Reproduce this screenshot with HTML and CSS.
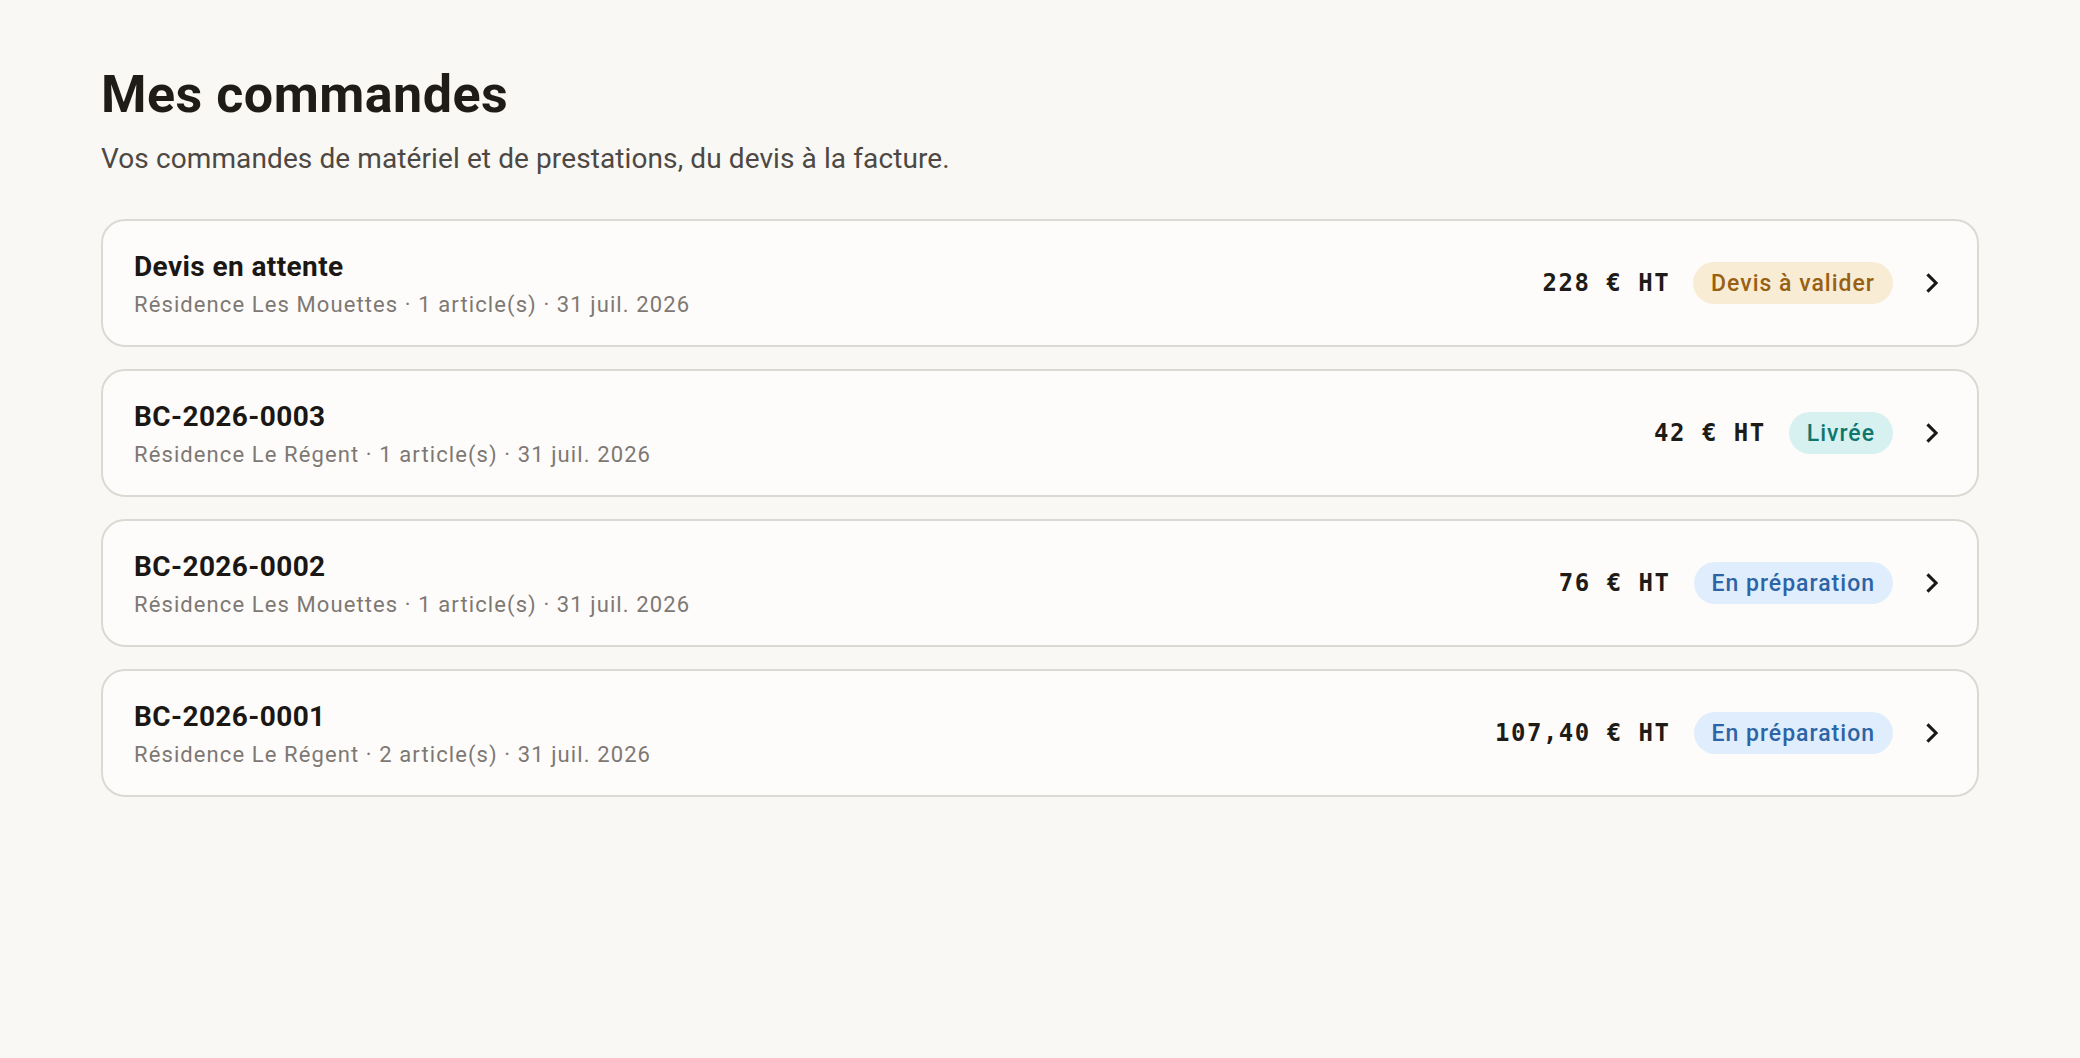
FILE: index.html
```html
<!DOCTYPE html>
<html lang="fr">
<head>
<meta charset="utf-8">
<title>Mes commandes</title>
<link rel="stylesheet" href="styles.css">
</head>
<body>
<main class="page">
  <header class="page-head">
    <h1 class="page-title">Mes commandes</h1>
    <p class="page-sub">Vos commandes de matériel et de prestations, du devis à la facture.</p>
  </header>
  <ul class="orders">
    <li class="order">
      <div class="order-info">
        <h2 class="order-title">Devis en attente</h2>
        <p class="order-meta">Résidence Les Mouettes · 1 article(s) · 31 juil. 2026</p>
      </div>
      <div class="order-side">
        <span class="price">228 € HT</span>
        <span class="badge badge-amber">Devis à valider</span>
        <svg class="chevron" viewBox="0 0 24 24" width="28" height="28" aria-hidden="true"><path d="M9 5.5l6.5 6.5L9 18.5"/></svg>
      </div>
    </li>
    <li class="order">
      <div class="order-info">
        <h2 class="order-title">BC-2026-0003</h2>
        <p class="order-meta">Résidence Le Régent · 1 article(s) · 31 juil. 2026</p>
      </div>
      <div class="order-side">
        <span class="price">42 € HT</span>
        <span class="badge badge-teal">Livrée</span>
        <svg class="chevron" viewBox="0 0 24 24" width="28" height="28" aria-hidden="true"><path d="M9 5.5l6.5 6.5L9 18.5"/></svg>
      </div>
    </li>
    <li class="order">
      <div class="order-info">
        <h2 class="order-title">BC-2026-0002</h2>
        <p class="order-meta">Résidence Les Mouettes · 1 article(s) · 31 juil. 2026</p>
      </div>
      <div class="order-side">
        <span class="price">76 € HT</span>
        <span class="badge badge-blue">En préparation</span>
        <svg class="chevron" viewBox="0 0 24 24" width="28" height="28" aria-hidden="true"><path d="M9 5.5l6.5 6.5L9 18.5"/></svg>
      </div>
    </li>
    <li class="order">
      <div class="order-info">
        <h2 class="order-title">BC-2026-0001</h2>
        <p class="order-meta">Résidence Le Régent · 2 article(s) · 31 juil. 2026</p>
      </div>
      <div class="order-side">
        <span class="price">107,40 € HT</span>
        <span class="badge badge-blue">En préparation</span>
        <svg class="chevron" viewBox="0 0 24 24" width="28" height="28" aria-hidden="true"><path d="M9 5.5l6.5 6.5L9 18.5"/></svg>
      </div>
    </li>
  </ul>
</main>
</body>
</html>
```

FILE: styles.css
```css
* { box-sizing: border-box; }

html, body {
  margin: 0;
  padding: 0;
  background: #f9f8f5;
}

body {
  font-family: Roboto, "Noto Sans", sans-serif;
  color: #1f1b17;
}

.page {
  padding: 63px 101px 40px;
}

.page-head {
  margin-bottom: 42px;
}

.page-title {
  margin: 0;
  font-size: 52px;
  line-height: 64px;
  font-weight: 700;
  color: #1f1b17;
  letter-spacing: 0.5px;
}

.page-sub {
  margin: 14px 0 0;
  font-size: 28px;
  line-height: 36px;
  color: #4d4843;
  letter-spacing: 0.1px;
}

.orders {
  list-style: none;
  margin: 0;
  padding: 0;
  display: flex;
  flex-direction: column;
  gap: 22px;
}

.order {
  display: flex;
  align-items: center;
  justify-content: space-between;
  height: 128px;
  padding: 0 31px;
  background: #fdfcfa;
  border: 2px solid #dcd9d4;
  border-radius: 24px;
}

.order-info {
  display: flex;
  flex-direction: column;
  gap: 5px;
  padding-top: 2px;
}

.order-title {
  margin: 0;
  font-size: 28px;
  line-height: 36px;
  font-weight: 700;
  color: #1a1714;
  letter-spacing: 0.4px;
}

.order-meta {
  margin: 0;
  font-size: 22px;
  line-height: 30px;
  color: #7d7873;
  letter-spacing: 1.1px;
}

.order-side {
  display: flex;
  align-items: center;
}

.price {
  font-family: "DejaVu Sans Mono", "Liberation Mono", monospace;
  font-weight: 700;
  font-size: 24px;
  letter-spacing: 1.5px;
  color: #1f1b17;
  margin-right: 23px;
  white-space: pre;
}

.badge {
  display: inline-flex;
  align-items: center;
  height: 42px;
  padding: 0 18px;
  border-radius: 21px;
  font-size: 23px;
  font-weight: 500;
  letter-spacing: 1px;
  white-space: nowrap;
}

.badge-amber { background: #f9ecd5; color: #976012; }
.badge-teal  { background: #d6f1ef; color: #0f766e; }
.badge-blue  { background: #e0edfc; color: #2c64a6; }

.chevron {
  margin-left: 25px;
  fill: none;
  stroke: #1a1714;
  stroke-width: 2.6;
  stroke-linecap: square;
  stroke-linejoin: miter;
}
```
